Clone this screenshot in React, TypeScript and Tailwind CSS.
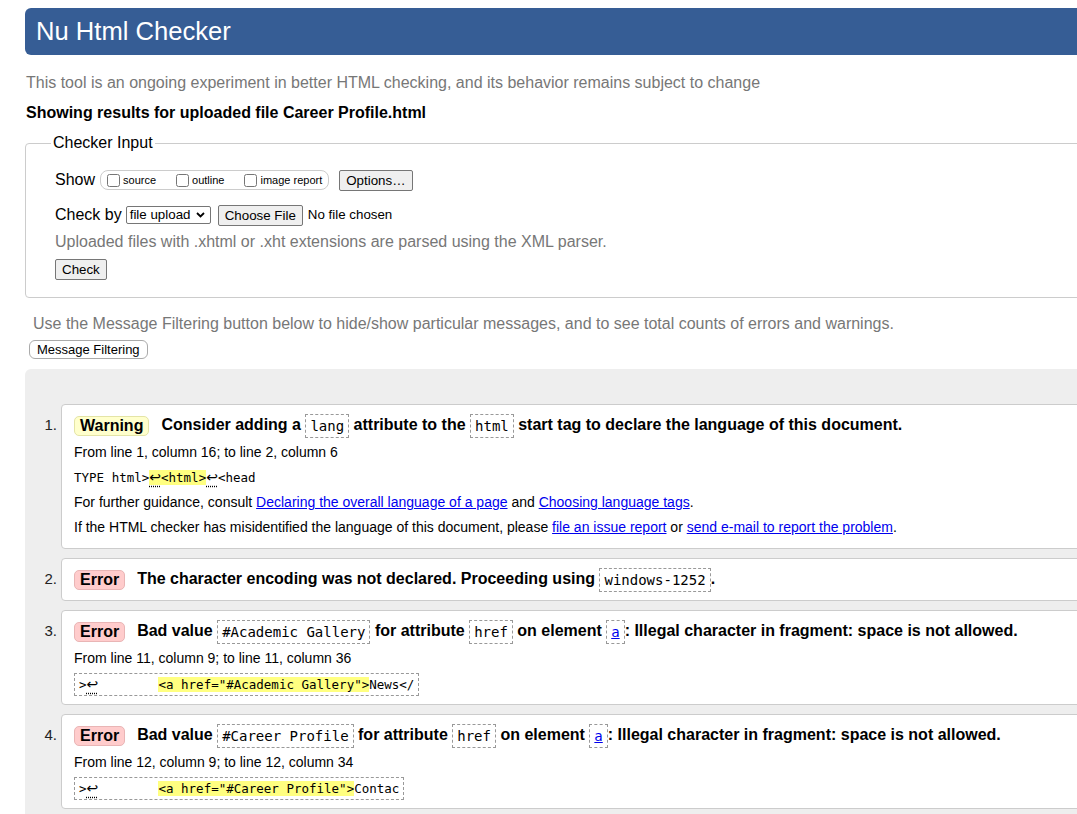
import type { ReactNode } from "react";

// inline code value inside a message title
const Code = ({ children }: { children: ReactNode }) => (
  <code className="inline-block align-middle border border-dashed border-[#999] px-[4px] py-[2px] font-['DejaVu_Sans_Mono',monospace] text-[14px] leading-[18px] font-normal">
    {children}
  </code>
);

const Badge = ({ kind }: { kind: "Warning" | "Error" }) =>
  kind === "Warning" ? (
    <span className="inline-block align-middle rounded-[5px] border border-[#e4e4a6] bg-[#ffffcc] px-[5px] leading-[18px] mr-[12px]">
      Warning
    </span>
  ) : (
    <span className="inline-block align-middle rounded-[5px] border border-[#e9b5b5] bg-[#ffcccc] px-[5px] leading-[18px] mr-[12px]">
      Error
    </span>
  );

const Link = ({ children }: { children: ReactNode }) => (
  <a href="#" className="text-[#0000ee] underline">
    {children}
  </a>
);

// return-arrow marker for a line break in the source extract
const Ret = () => (
  <span className="font-['DejaVu_Sans',sans-serif] text-[14px] underline decoration-dotted underline-offset-[4px]">↩</span>
);

const Btn = ({ children, className = "" }: { children: ReactNode; className?: string }) => (
  <button className={"h-[21px] border border-[#767676] rounded-[2px] bg-[#efefef] px-[6px] text-[13.33px] leading-[15px] text-black " + className}>
    {children}
  </button>
);

const Item = ({ n, children }: { n: number; children: ReactNode }) => (
  <li className="flex">
    <div className="w-[36px] shrink-0 pr-[4px] text-right text-[15px] leading-[26px] mt-[8px] text-[#222]">{n}.</div>
    <div className="flex-1 bg-white border border-[#ccc] rounded-[4px] px-[12px] pt-[7px] pb-[8px]">{children}</div>
  </li>
);

const Title = ({ children }: { children: ReactNode }) => (
  <div className="h-[26px] leading-[26px] text-base font-bold whitespace-nowrap">{children}</div>
);

const Line = ({ children, first = false }: { children: ReactNode; first?: boolean }) => (
  <div className={"text-[14px] leading-[25px] whitespace-nowrap " + (first ? "mt-[2px]" : "")}>{children}</div>
);

const Extract = ({ children }: { children: ReactNode }) => (
  <div className="leading-[25px] font-['DejaVu_Sans_Mono',monospace] text-[12.5px] whitespace-pre">{children}</div>
);

export default function App() {
  return (
    <div className="w-[1077px] h-[814px] overflow-hidden bg-white text-black font-['Liberation_Sans',Arial,sans-serif]">
      <div className="ml-[25px] w-[1090px] pt-[8px]">
        <h1 className="h-[47px] flex items-center bg-[#365d95] rounded-l-[6px] pl-[11px] text-[25.6px] text-white font-normal">
          Nu Html Checker
        </h1>

        <p className="mt-[18px] ml-[1px] text-base leading-[20px] text-[#777]">
          This tool is an ongoing experiment in better HTML checking, and its behavior remains subject to change
        </p>
        <p className="mt-[10px] ml-[1px] text-base leading-[20px] font-bold">
          Showing results for uploaded file Career Profile.html
        </p>

        {/* Checker Input */}
        <fieldset className="mt-[10px] border border-[#ccc] rounded-[4px] pl-[25px] pb-[16px]">
          <legend className="px-[2px] text-base leading-[20px]">Checker Input</legend>
          <div className="pl-[4px]">
            <div className="mt-[16px] h-[22px] flex items-center">
              <span className="text-base">Show</span>
              <div className="ml-[5px] h-[20px] flex items-center border border-[#ccc] rounded-[8px] pl-[6px] pr-[6px] text-[11px]">
                <input type="checkbox" className="m-0 h-[13px] w-[13px]" />
                <span className="ml-[3px]">source</span>
                <input type="checkbox" className="m-0 ml-[20px] h-[13px] w-[13px]" />
                <span className="ml-[3px]">outline</span>
                <input type="checkbox" className="m-0 ml-[20px] h-[13px] w-[13px]" />
                <span className="ml-[3px]">image report</span>
              </div>
              <Btn className="ml-[10px]">Options…</Btn>
            </div>

            <div className="mt-[13px] h-[22px] flex items-center">
              <span className="text-base">Check by</span>
              <div className="ml-[4px] h-[18px] w-[85px] flex items-center justify-between border border-[#767676] rounded-[2px] bg-white pl-[3px] pr-[5px] text-[13.33px]">
                <span>file upload</span>
                <svg width="9" height="6" viewBox="0 0 9 6">
                  <path d="M1 1l3.5 3.5L8 1" fill="none" stroke="#000" strokeWidth="1.8" />
                </svg>
              </div>
              <Btn className="ml-[7px] h-[20px]">Choose File</Btn>
              <span className="ml-[5px] text-[13.33px]">No file chosen</span>
            </div>

            <p className="mt-[6px] text-base leading-[20px] text-[#777]">
              Uploaded files with .xhtml or .xht extensions are parsed using the XML parser.
            </p>
            <Btn className="mt-[7px] h-[20px]">Check</Btn>
          </div>
        </fieldset>

        <p className="mt-[16px] ml-[8px] text-base leading-[20px] text-[#777]">
          Use the Message Filtering button below to hide/show particular messages, and to see total counts of errors and warnings.
        </p>
        <button className="mt-[6px] ml-[4px] h-[19px] border border-[#aaa] rounded-[6px] bg-white px-[7px] text-[13px] leading-[15px]">
          Message Filtering
        </button>

        {/* results */}
        <div className="mt-[8px] bg-[#eee] rounded-tl-[6px] pt-[35px] pb-[30px]">
          <ol className="flex flex-col gap-[9px]">
            <Item n={1}>
              <Title>
                <Badge kind="Warning" />
                Consider adding a <Code>lang</Code> attribute to the <Code>html</Code> start tag to declare the language of this document.
              </Title>
              <Line first>From line 1, column 16; to line 2, column 6</Line>
              <Extract>
                TYPE html&gt;
                <span className="bg-[#ffff80]">
                  <Ret />
                  &lt;html&gt;
                </span>
                <Ret />
                &lt;head
              </Extract>
              <Line>
                For further guidance, consult <Link>Declaring the overall language of a page</Link> and{" "}
                <Link>Choosing language tags</Link>.
              </Line>
              <Line>
                If the HTML checker has misidentified the language of this document, please <Link>file an issue report</Link> or{" "}
                <Link>send e-mail to report the problem</Link>.
              </Line>
            </Item>

            <Item n={2}>
              <Title>
                <Badge kind="Error" />
                The character encoding was not declared. Proceeding using <Code>windows-1252</Code>.
              </Title>
            </Item>

            <Item n={3}>
              <Title>
                <Badge kind="Error" />
                Bad value <Code>#Academic Gallery</Code> for attribute <Code>href</Code> on element{" "}
                <Code>
                  <span className="text-[#0000ee] underline">a</span>
                </Code>
                : Illegal character in fragment: space is not allowed.
              </Title>
              <Line first>From line 11, column 9; to line 11, column 36</Line>
              <Extract>
                <span className="inline-block align-middle border border-dashed border-[#999] px-[4px] leading-[20px]">
                  &gt;<Ret />{"        "}
                  <span className="bg-[#ffff80]">&lt;a href="#Academic Gallery"&gt;</span>News&lt;/
                </span>
              </Extract>
            </Item>

            <Item n={4}>
              <Title>
                <Badge kind="Error" />
                Bad value <Code>#Career Profile</Code> for attribute <Code>href</Code> on element{" "}
                <Code>
                  <span className="text-[#0000ee] underline">a</span>
                </Code>
                : Illegal character in fragment: space is not allowed.
              </Title>
              <Line first>From line 12, column 9; to line 12, column 34</Line>
              <Extract>
                <span className="inline-block align-middle border border-dashed border-[#999] px-[4px] leading-[20px]">
                  &gt;<Ret />{"        "}
                  <span className="bg-[#ffff80]">&lt;a href="#Career Profile"&gt;</span>Contac
                </span>
              </Extract>
            </Item>
          </ol>
        </div>
      </div>
    </div>
  );
}
